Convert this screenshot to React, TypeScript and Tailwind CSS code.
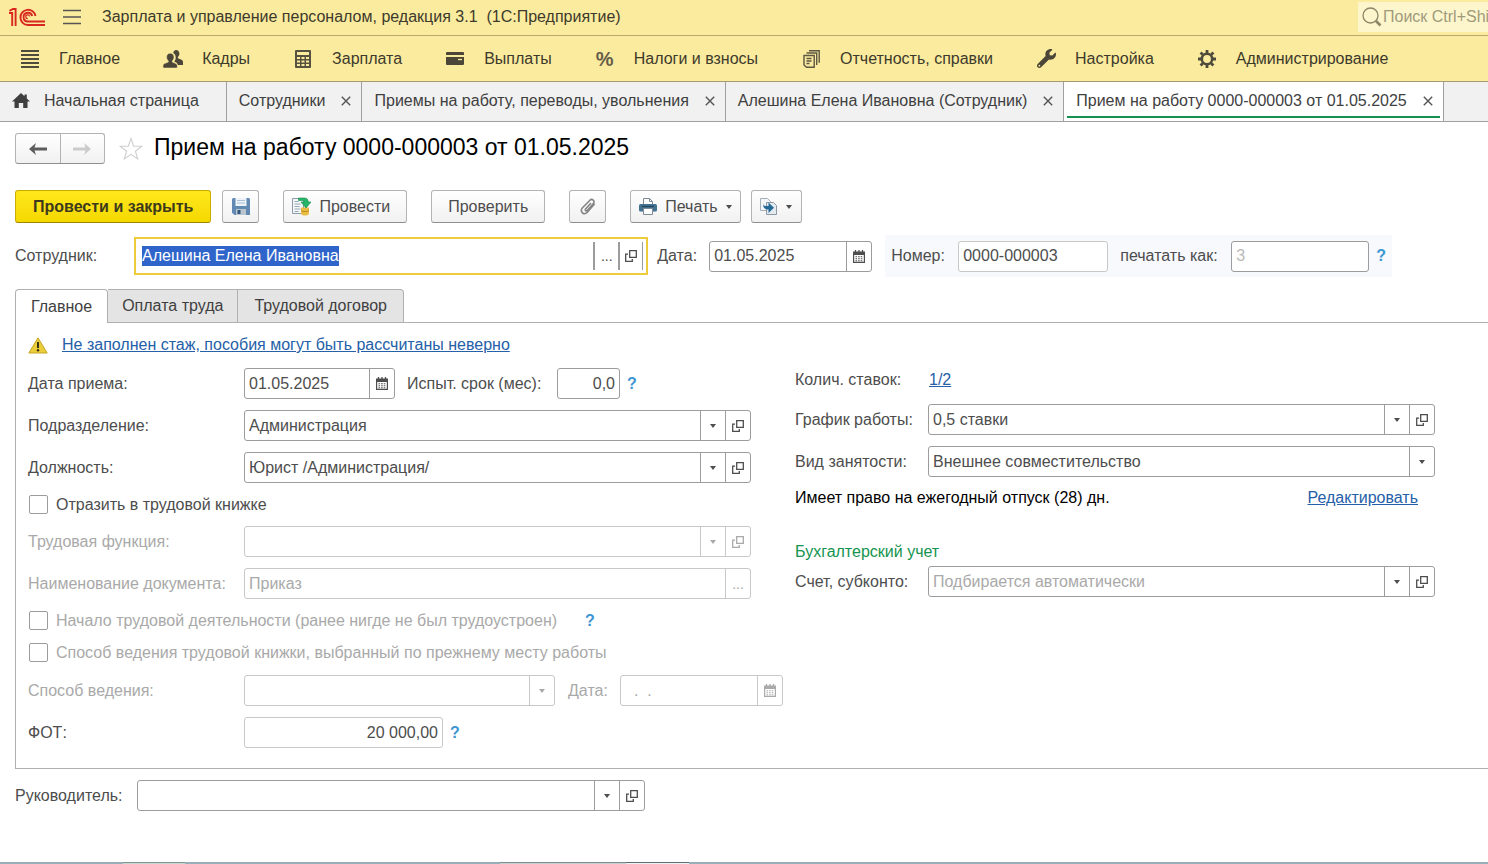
import { useEffect, useRef, type ReactNode } from 'react';
import clsx from 'clsx';
import { FaWrench } from 'react-icons/fa';

/* ---------- Icons ---------- */

const LogoIcon = () => (
  <svg width="36" height="18" viewBox="0 0 36 18" fill="none" stroke="#d8281f" strokeWidth="1.9">
    <path d="M0 5h3.200V18M.5 2.800 4 1h2.600v17" />
    <path d="M26.500 8A7.600 7.600 0 1 0 18.800 17H36" />
    <path d="M23.200 8a4.400 4.400 0 1 0-4.400 5.500H36" />
    <path d="M20.500 8.400a1.900 1.900 0 1 0-1.700 2.200" strokeWidth="1.200" />
  </svg>
);

const BurgerIcon = () => (
  <svg width="18" height="16" viewBox="0 0 18 16" stroke="#555" strokeWidth="1.4">
    <path d="M0 1.5h18M0 8h18M0 14.5h18" />
  </svg>
);

const ListIcon = () => (
  <svg width="18" height="18" viewBox="0 0 18 18" stroke="#4f4b3c" strokeWidth="2">
    <path d="M0 1h18M0 5h18M0 9h18M0 13h18M0 17h18" />
  </svg>
);

const PeopleIcon = () => (
  <svg width="20" height="18" viewBox="0 0 20 18" fill="#4b4638">
    <path d="M13 0c2 0 3.400 1.500 3.400 3.600 0 1.500-.6 2.700-1.500 3.500v1.200l3.600 1.500c1 .5 1.500 1.200 1.500 2.300V15h-5.200c-.3-1.500-1.200-2.300-2.600-2.900l-1-.5c1-1 1.500-2.400 1.500-4.100 0-2-.9-3.600-2.500-4.500C10.600 1.100 11.600 0 13 0z" />
    <path
      d="M7.300 3.200c2.200 0 3.700 1.600 3.700 3.900 0 1.700-.7 3-1.700 3.800v1.200l3.500 1.500c1 .5 1.500 1.300 1.500 2.400v1c0 .6-.4 1-1 1H1c-.6 0-1-.4-1-1v-1c0-1.100.5-1.900 1.500-2.400L5.300 12.100v-1.200c-1-.8-1.700-2.100-1.700-3.800 0-2.300 1.500-3.900 3.700-3.900z"
      stroke="#fbeb9e"
      strokeWidth=".5"
    />
  </svg>
);

const CalculatorIcon = () => (
  <svg width="16" height="18" viewBox="0 0 16 18">
    <rect width="16" height="18" rx="1" fill="#57513f" />
    <path d="M2 2h12v3H2z" fill="#fbeb9e" />
    <path
      d="M2 7h3v2H2zM6.500 7h3v2h-3zM11 7h3v2h-3zM2 10.500h3v2H2zM6.500 10.500h3v2h-3zM11 10.500h3v2h-3zM2 14h3v2H2zM6.500 14h3v2h-3zM11 14h3v2h-3z"
      fill="#fbeb9e"
    />
  </svg>
);

const CardIcon = () => (
  <svg width="18" height="13" viewBox="0 0 18 13">
    <path d="M1 0h16a1 1 0 0 1 1 1v2H0V1a1 1 0 0 1 1-1zM0 5h18v7a1 1 0 0 1-1 1H1a1 1 0 0 1-1-1z" fill="#4b4638" />
    <path d="M12 7.500h4" stroke="#fbeb9e" strokeWidth="1.300" />
  </svg>
);

const PapersIcon = () => (
  <svg width="17" height="18" viewBox="0 0 17 18" fill="none" stroke="#5d5743" strokeWidth="1.400">
    <path d="M6 .7h10.200v12M3.500 3h10.200v12" />
    <path d="M1 5.500h10.200v11.800H3.500L1 15z" />
    <path d="M3.500 8.500h5M3.500 11h5M3.500 13.500h3" />
  </svg>
);

const GearIcon = () => (
  <svg width="18" height="18" viewBox="0 0 18 18" fill="none" stroke="#4f4b3c">
    <circle cx="9" cy="9" r="5.200" strokeWidth="2.600" />
    <path
      d="M9 0v3M9 15v3M0 9h3M15 9h3M2.600 2.600l2.200 2.200M13.200 13.200l2.200 2.200M2.600 15.400l2.200-2.200M13.200 4.800l2.200-2.200"
      strokeWidth="2.800"
    />
  </svg>
);

const HomeIcon = () => (
  <svg width="18" height="15" viewBox="0 0 18 15" fill="#3f3f3f">
    <path d="M9 0l3.500 3.300V1.500h2.300v4L18 8.500h-2.500V15h-4.300v-5H6.800v5H2.500V8.500H0z" />
  </svg>
);

const SearchIcon = () => (
  <svg width="20" height="20" viewBox="0 0 20 20" fill="none" stroke="#8d8666">
    <circle cx="8.500" cy="8.500" r="7.500" strokeWidth="1.300" />
    <path d="M14 14l4.500 4.500" strokeWidth="2.600" />
  </svg>
);

const CloseIcon = () => (
  <svg width="10" height="10" viewBox="0 0 10 10" stroke="#555" strokeWidth="1.400">
    <path d="M.8.8l8.400 8.400M9.200.8L.8 9.200" />
  </svg>
);

const ArrowIcon = ({ className }: { className: string }) => (
  <svg width="18" height="12" viewBox="0 0 18 12" className={className}>
    <path d="M0 6l7-6-1.500 4.500H18v3H5.500L7 12z" fill="currentColor" />
  </svg>
);

const StarIcon = () => (
  <svg width="24" height="24" viewBox="0 0 24 24" fill="none" stroke="#cfcfcf" strokeWidth="1.100">
    <path d="M12 1.500l2.700 7.600 8 .2-6.300 4.900 2.300 7.800-6.700-4.600L5.300 22l2.300-7.800L1.300 9.300l8-.2z" />
  </svg>
);

const SaveIcon = () => (
  <svg width="18" height="17" viewBox="0 0 18 17">
    <path d="M1.500 0h15A1.500 1.500 0 0 1 18 1.500V17H2.500L0 14.800V1.500A1.500 1.500 0 0 1 1.500 0z" fill="#6189b4" />
    <path d="M3.500 0h11v8h-11z" fill="#edf3f9" />
    <path d="M5 2.500h8M5 5h8" stroke="#a9bfd6" />
    <path d="M4 11h10v6H4z" fill="#b9c6ce" />
    <path d="M5.500 12h3v4h-3z" fill="#34587d" />
  </svg>
);

const PostIcon = () => (
  <svg width="19" height="19" viewBox="0 0 19 19">
    <path d="M.5 1.500h11v15H.5z" fill="#f4f7fa" stroke="#8d9aa8" />
    <path d="M2.500 4.500h4M2.500 7h6M2.500 9.500h5M2.500 12h6M2.500 14.500h4" stroke="#9aa8b5" />
    <path d="M9 10.500h8v6c0 2.700-8 2.700-8 0z" fill="#e9bd45" />
    <path d="M9 13.500c1.500 1.500 6.500 1.500 8 0" stroke="#b98a1e" fill="none" />
    <path d="M6.500 1h6c2.500 0 3.700 1.500 3.700 4H19l-5 6-5-6h3c0-1.200-.6-1.500-1.500-1.500h-4z" fill="#27b567" stroke="#138a4a" strokeWidth=".6" />
  </svg>
);

const ClipIcon = () => (
  <svg width="16" height="17" viewBox="0 0 16 17" fill="none" stroke="#858585" strokeWidth="1.600" strokeLinecap="round">
    <path d="M10.500 5.500 5.600 11c-1 1.200.6 2.600 1.700 1.400l6-6.900c2-2.400-1.200-5.600-3.600-3L2.500 9.800c-3.200 3.800 1.500 8 4.800 4.500l7-8" />
  </svg>
);

const PrinterIcon = () => (
  <svg width="18" height="17" viewBox="0 0 18 17">
    <path d="M4.500 7V.5h6l3 3V7" fill="#fff" stroke="#7e8b97" />
    <path d="M10.500.5v3h3" fill="none" stroke="#7e8b97" />
    <rect y="6" width="18" height="7.500" rx="1.500" fill="#44708f" />
    <path d="M3 8.500h12" stroke="#22465f" strokeWidth="1.200" />
    <path d="M4.500 10.500h9v6h-9z" fill="#fff" stroke="#7e8b97" />
  </svg>
);

const CopyFromIcon = () => (
  <svg width="18" height="17" viewBox="0 0 18 17">
    <path d="M.5.500h7l3 3v9H.5z" fill="#f3f6f8" stroke="#a6b0b9" />
    <path d="M6.500 4.500h7l3 3v9h-10z" fill="#e4ebf0" stroke="#8b98a4" />
    <path d="M3 4.500c0 3 1 3.500 5.500 3.500V4.500L14 9.700 8.500 15v-3.500C4 11.500 3 9 3 4.500z" fill="#266a97" />
  </svg>
);

const WarningIcon = () => (
  <svg width="20" height="17" viewBox="0 0 20 17">
    <path d="M10 .8 19.200 16H.8z" fill="#ebcd3a" stroke="#c4a626" strokeLinejoin="round" />
    <path d="M10 5v6" stroke="#3b3410" strokeWidth="2" />
    <circle cx="10" cy="13.300" r="1.200" fill="#3b3410" />
  </svg>
);

const CaretIcon = () => (
  <svg width="6" height="4" viewBox="0 0 6 4">
    <path d="M0 0h6L3 4z" fill="currentColor" />
  </svg>
);

const OpenIcon = () => (
  <svg width="12" height="12" viewBox="0 0 12 12" fill="none" stroke="currentColor" strokeWidth="1.300">
    <path d="M4.700.7h6.600v6.600H4.700z" />
    <path d="M3 4.200H.7v7.100h6.600V9" />
  </svg>
);

const CalendarIcon = () => (
  <svg width="12" height="13" viewBox="0 0 12 13">
    <path d="M2.500 0v3M6 0v3M9.500 0v3" stroke="currentColor" strokeWidth="1.300" />
    <path d="M.6 2h10.800v10.400H.6z" fill="none" stroke="currentColor" strokeWidth="1.200" />
    <path d="M0 2h12v3H0z" fill="currentColor" />
    <path d="M2.500 6.800h7M2.500 8.800h7M2.500 10.700h7" stroke="currentColor" strokeWidth="1.100" strokeDasharray="1.600 1" />
  </svg>
);

/* ---------- Form parts ---------- */

type BoxProps = { disabled?: boolean; className?: string; children: ReactNode };

// Rounded frame shared by every field
const Box = ({ disabled, className, children }: BoxProps) => (
  <div
    className={clsx(
      'flex h-[31px] min-w-0 overflow-hidden rounded-[3px] border bg-white',
      disabled ? 'border-[#c8c8c8] text-[#a9a9a9]' : 'border-[#9c9c9c] text-[#4d4d4d]',
      className,
    )}
  >
    {children}
  </div>
);

type CellProps = { label: string; disabled?: boolean; children: ReactNode };

const CellButton = ({ label, disabled, children }: CellProps) => (
  <button
    type="button"
    aria-label={label}
    disabled={disabled}
    className={clsx(
      'flex w-[25px] shrink-0 items-center justify-center border-l',
      disabled ? 'border-[#c8c8c8]' : 'border-[#9c9c9c]',
    )}
  >
    {children}
  </button>
);

type SelectFieldProps = {
  id: string;
  value: string;
  disabled?: boolean;
  open?: boolean;
  muted?: boolean;
  className?: string;
};

const SelectField = ({ id, value, disabled, open, muted, className }: SelectFieldProps) => (
  <Box disabled={disabled} className={className}>
    <div className="relative min-w-0 flex-1">
      <select
        id={id}
        disabled={disabled}
        className={clsx('h-full w-full appearance-none pr-7 pl-1 outline-none', muted && 'text-[#a9a9a9]')}
      >
        <option>{value}</option>
      </select>
      <span
        className={clsx(
          'pointer-events-none absolute inset-y-0 right-0 flex w-[25px] items-center justify-center border-l',
          disabled ? 'border-[#c8c8c8]' : 'border-[#9c9c9c]',
        )}
      >
        <CaretIcon />
      </span>
    </div>
    {open && (
      <CellButton label="Открыть" disabled={disabled}>
        <OpenIcon />
      </CellButton>
    )}
  </Box>
);

const DateField = ({ id, value, disabled, className }: SelectFieldProps) => (
  <Box disabled={disabled} className={className}>
    <input
      id={id}
      defaultValue={value}
      disabled={disabled}
      className="w-0 min-w-0 flex-1 px-1 whitespace-pre outline-none"
    />
    <CellButton label="Календарь" disabled={disabled}>
      <CalendarIcon />
    </CellButton>
  </Box>
);

const Help = () => (
  <button type="button" className="font-bold text-[#3d96d2]">
    ?
  </button>
);

type RowProps = { id: string; label: string; disabled?: boolean; children: ReactNode };

const LeftRow = ({ id, label, disabled, children }: RowProps) => (
  <div className="flex items-center">
    <label htmlFor={id} className={clsx('w-[216px] shrink-0', disabled && 'text-[#a9a9a9]')}>
      {label}
    </label>
    {children}
  </div>
);

const RightRow = ({ id, label, children }: RowProps) => (
  <div className="flex items-center">
    <label htmlFor={id} className="w-[133px] shrink-0">
      {label}
    </label>
    {children}
  </div>
);

const CheckRow = ({ id, label, disabled, children }: Omit<RowProps, 'children'> & { children?: ReactNode }) => (
  <div className="flex h-[21px] items-center">
    <input
      id={id}
      type="checkbox"
      disabled={disabled}
      className="ml-px size-[19px] shrink-0 appearance-none rounded-[2px] border border-[#9c9c9c] bg-white"
    />
    <label htmlFor={id} className={clsx('mr-7 ml-2', disabled && 'text-[#a9a9a9]')}>
      {label}
    </label>
    {children}
  </div>
);

const toolButton =
  'flex h-[33px] items-center justify-center rounded-[3px] border border-[#b3b3b3] border-b-[#8f8f8f] bg-linear-to-b from-white to-[#f1f1f1]';

/* ---------- Page ---------- */

const sections = [
  { label: 'Главное', icon: <ListIcon /> },
  { label: 'Кадры', icon: <PeopleIcon /> },
  { label: 'Зарплата', icon: <CalculatorIcon /> },
  { label: 'Выплаты', icon: <CardIcon /> },
  { label: 'Налоги и взносы', icon: <span className="text-xl font-bold text-[#655e49]">%</span> },
  { label: 'Отчетность, справки', icon: <PapersIcon /> },
  { label: 'Настройка', icon: <FaWrench className="size-[19px] text-[#4b4638]" /> },
  { label: 'Администрирование', icon: <GearIcon /> },
];

const windows = [
  'Сотрудники',
  'Приемы на работу, переводы, увольнения',
  'Алешина Елена Ивановна (Сотрудник)',
  'Прием на работу 0000-000003 от 01.05.2025',
];

export default function App() {
  const employeeRef = useRef<HTMLInputElement>(null);

  useEffect(() => {
    employeeRef.current?.focus();
    employeeRef.current?.select();
  }, []);

  return (
    <div className="flex min-h-screen flex-col overflow-hidden bg-white font-['Liberation_Sans',Arial,sans-serif] text-base leading-5 text-[#4d4d4d]">
      {/* Title bar */}
      <header className="flex h-9 items-center border-b border-[#b5a96c] bg-[#fbeb9e] pb-0.5 pl-[9px] text-[#3d3a2c]">
        <LogoIcon />
        <button type="button" aria-label="Меню" className="ml-[18px]">
          <BurgerIcon />
        </button>
        <span className="ml-[21px] flex-1 whitespace-pre">
          Зарплата и управление персоналом, редакция 3.1{'  '}(1С:Предприятие)
        </span>
        <label className="flex h-[30px] w-[130px] shrink-0 items-center bg-[#fdf6cd] pl-1">
          <SearchIcon />
          <input
            type="text"
            aria-label="Поиск"
            placeholder="Поиск Ctrl+Shift+F"
            className="ml-px w-0 flex-1 outline-none placeholder:text-[#a09a7c]"
          />
        </label>
      </header>

      {/* Sections */}
      <nav className="flex h-[46px] items-center gap-[43px] border-b border-[#a39b72] bg-[#fbeb9e] pl-5 text-[#3d3a2c]">
        {sections.map((s) => (
          <a key={s.label} href="#" className="flex items-center gap-[19px] whitespace-nowrap">
            <span className="flex w-5 justify-center">{s.icon}</span>
            {s.label}
          </a>
        ))}
      </nav>

      {/* Open windows */}
      <div className="flex h-10 border-b border-[#a0a0a0] bg-[#f1f1f1] text-[#3f3f3f]">
        <a
          href="#"
          className="flex items-center gap-[14px] border-r border-[#a0a0a0] pr-[27px] pb-0.5 pl-3 whitespace-nowrap"
        >
          <HomeIcon />
          Начальная страница
        </a>
        {windows.map((title, i) => {
          const active = i === windows.length - 1;
          return (
            <div
              key={title}
              className={clsx(
                'relative flex items-center gap-4 border-r border-[#a0a0a0] pr-[10px] pb-0.5 pl-3',
                active && 'bg-white',
              )}
            >
              <a href="#" className="whitespace-nowrap">
                {title}
              </a>
              <button type="button" aria-label="Закрыть">
                <CloseIcon />
              </button>
              {active && <span className="absolute inset-x-[3px] bottom-[3px] h-0.5 bg-[#159150]" />}
            </div>
          );
        })}
      </div>

      <main className="pt-[11px] pl-[15px]">
        {/* Form title */}
        <div className="flex items-center">
          <div className="flex h-[31px] w-[90px] rounded-[3px] border border-[#b3b3b3] border-b-[#8f8f8f] bg-linear-to-b from-white to-[#f1f1f1]">
            <button type="button" aria-label="Назад" className="flex flex-1 items-center justify-center border-r border-[#b3b3b3]">
              <ArrowIcon className="text-[#5c5c5c]" />
            </button>
            <button type="button" aria-label="Вперед" className="flex flex-1 items-center justify-center">
              <ArrowIcon className="rotate-180 text-[#cbcbcb]" />
            </button>
          </div>
          <button type="button" aria-label="В избранное" className="ml-[14px]">
            <StarIcon />
          </button>
          <h1 className="ml-[11px] pb-1 text-[23px] text-black">Прием на работу 0000-000003 от 01.05.2025</h1>
        </div>

        {/* Toolbar */}
        <div className="mt-[26px] flex items-center">
          <button
            type="button"
            className="h-[33px] rounded-[3px] border border-[#c9ac00] border-b-[#9c8500] bg-linear-to-b from-[#ffe81a] to-[#f5d800] px-[17px] font-bold text-[#3d3a1c]"
          >
            Провести и закрыть
          </button>
          <button type="button" aria-label="Записать" className={clsx(toolButton, 'ml-[11px] w-[37px]')}>
            <SaveIcon />
          </button>
          <button type="button" className={clsx(toolButton, 'ml-6 gap-2 pr-4 pl-2')}>
            <PostIcon />
            Провести
          </button>
          <button type="button" className={clsx(toolButton, 'ml-6 px-4')}>
            Проверить
          </button>
          <button type="button" aria-label="Файлы" className={clsx(toolButton, 'ml-6 w-[37px]')}>
            <ClipIcon />
          </button>
          <button type="button" className={clsx(toolButton, 'ml-6 gap-2 px-2')}>
            <PrinterIcon />
            Печать
            <CaretIcon />
          </button>
          <button type="button" aria-label="Создать на основании" className={clsx(toolButton, 'ml-[10px] w-[51px] gap-2')}>
            <CopyFromIcon />
            <CaretIcon />
          </button>
        </div>

        {/* Document header */}
        <div className="mt-3 flex h-[42px] items-center pr-24">
          <label htmlFor="employee" className="w-[119px] shrink-0">
            Сотрудник:
          </label>
          <div className="flex h-[38px] flex-1 border-2 border-[#edcb3b] py-[3px] pr-[3px]">
            <input
              id="employee"
              ref={employeeRef}
              defaultValue="Алешина Елена Ивановна"
              className="w-0 flex-1 px-[6px] outline-none selection:bg-[#2f65ca] selection:text-white"
            />
            <button type="button" aria-label="Выбрать" className="w-[25px] border-l-2 border-[#9c9c9c] text-sm">
              ...
            </button>
            <button
              type="button"
              aria-label="Открыть"
              className="flex w-[25px] items-center justify-center border-r border-l-2 border-[#9c9c9c]"
            >
              <OpenIcon />
            </button>
          </div>
          <label htmlFor="date" className="ml-[9px] w-[52px]">
            Дата:
          </label>
          <DateField id="date" value="01.05.2025" className="w-[163px]" />
          <div className="ml-[13px] flex h-full items-center bg-[#f7f9fd] px-[6px]">
            <label htmlFor="number" className="w-[67px]">
              Номер:
            </label>
            <Box className="w-[150px] border-[#c8c8c8] bg-[#f7f9fd]">
              <input id="number" defaultValue="0000-000003" className="w-full px-1 outline-none" />
            </Box>
            <label htmlFor="printAs" className="ml-3 w-[111px] whitespace-nowrap">
              печатать как:
            </label>
            <Box className="mr-[7px] w-[138px]">
              <input id="printAs" placeholder="3" className="w-full px-1 outline-none placeholder:text-[#b9b9b9]" />
            </Box>
            <Help />
          </div>
        </div>

        {/* Pages */}
        <div className="mt-3 flex h-[34px] text-[#3f3f3f]">
          <button type="button" className="relative z-10 rounded-t-[4px] border border-b-0 border-[#b0b0b0] bg-white px-[15px]">
            Главное
          </button>
          <button type="button" className="border-y border-r border-[#b0b0b0] bg-[#e4e4e4] px-[14px]">
            Оплата труда
          </button>
          <button type="button" className="rounded-tr-[4px] border-y border-r border-[#b0b0b0] bg-[#e4e4e4] px-4">
            Трудовой договор
          </button>
        </div>

        <section className="-mt-px grid grid-cols-[723fr_640fr] gap-11 border-y border-l border-[#b0b0b0] pt-3 pr-[53px] pb-5 pl-3">
          <div>
            <div className="flex h-5 items-center">
              <WarningIcon />
              <a href="#" className="ml-[14px] text-[#2560a8] underline">
                Не заполнен стаж, пособия могут быть рассчитаны неверно
              </a>
            </div>

            <div className="mt-[13px] flex flex-col gap-[11px]">
              <LeftRow id="hireDate" label="Дата приема:">
                <DateField id="hireDate" value="01.05.2025" className="w-[151px]" />
                <label htmlFor="probation" className="ml-3 w-[150px] whitespace-nowrap">
                  Испыт. срок (мес):
                </label>
                <Box className="mr-[7px] w-[63px]">
                  <input id="probation" defaultValue="0,0" className="w-full px-1 text-right outline-none" />
                </Box>
                <Help />
              </LeftRow>
              <LeftRow id="department" label="Подразделение:">
                <SelectField id="department" value="Администрация" open className="flex-1" />
              </LeftRow>
              <LeftRow id="position" label="Должность:">
                <SelectField id="position" value="Юрист /Администрация/" open className="flex-1" />
              </LeftRow>
              <CheckRow id="workbook" label="Отразить в трудовой книжке" />
              <LeftRow id="duty" label="Трудовая функция:" disabled>
                <SelectField id="duty" value="" disabled open className="flex-1" />
              </LeftRow>
              <LeftRow id="docName" label="Наименование документа:" disabled>
                <Box disabled className="flex-1">
                  <input id="docName" defaultValue="Приказ" disabled className="w-0 flex-1 px-1" />
                  <CellButton label="Выбрать" disabled>
                    <span className="text-sm">...</span>
                  </CellButton>
                </Box>
              </LeftRow>
              <CheckRow id="firstJob" label="Начало трудовой деятельности (ранее нигде не был трудоустроен)" disabled>
                <Help />
              </CheckRow>
              <CheckRow id="prevMethod" label="Способ ведения трудовой книжки, выбранный по прежнему месту работы" disabled />
            </div>

            <div className="mt-3 flex flex-col gap-[11px]">
              <div className="-mr-8">
                <LeftRow id="method" label="Способ ведения:" disabled>
                  <SelectField id="method" value="" disabled className="flex-1" />
                  <label htmlFor="methodDate" className="ml-[13px] w-[52px] text-[#a9a9a9]">
                    Дата:
                  </label>
                  <DateField id="methodDate" value="  .  ." disabled className="w-[163px]" />
                </LeftRow>
              </div>
              <LeftRow id="payroll" label="ФОТ:">
                <Box className="mr-[7px] w-[199px] border-[#c8c8c8]">
                  <input id="payroll" defaultValue="20 000,00" readOnly className="w-full px-1 text-right outline-none" />
                </Box>
                <Help />
              </LeftRow>
            </div>
          </div>

          <div className="pt-[35px]">
            <div className="flex h-5 items-center">
              <span className="w-[134px]">Колич. ставок:</span>
              <a href="#" className="text-[#2560a8] underline">
                1/2
              </a>
            </div>
            <div className="mt-[14px] flex flex-col gap-[11px]">
              <RightRow id="schedule" label="График работы:">
                <SelectField id="schedule" value="0,5 ставки" open className="flex-1" />
              </RightRow>
              <RightRow id="employment" label="Вид занятости:">
                <SelectField id="employment" value="Внешнее совместительство" className="flex-1" />
              </RightRow>
            </div>
            <div className="mt-[11px] flex h-5 items-center justify-between pr-[17px]">
              <span className="text-black">Имеет право на ежегодный отпуск (28) дн.</span>
              <a href="#" className="text-[#2560a8] underline">
                Редактировать
              </a>
            </div>
            <h2 className="mt-[34px] mb-1 text-[#149450]">Бухгалтерский учет</h2>
            <RightRow id="account" label="Счет, субконто:">
              <SelectField id="account" value="Подбирается автоматически" open muted className="flex-1" />
            </RightRow>
          </div>
        </section>

        {/* Footer */}
        <div className="mt-[11px] flex items-center">
          <label htmlFor="manager" className="w-[122px]">
            Руководитель:
          </label>
          <SelectField id="manager" value="" open className="w-[508px]" />
        </div>
      </main>

      {/* Edge of the system taskbar */}
      <div className="mt-auto flex h-0.5 bg-[#98aeb8]">
        <span className="ml-[123px] w-[62px] border-t border-[#7f958f] bg-[#c9d8cf]" />
        <span className="ml-[315px] w-[63px] border-t border-[#7f8f8f] bg-[#c5cfcc]" />
        <span className="w-[63px] border-t border-[#7f8f8f] bg-[#c5cfcc]" />
        <span className="w-[63px] border-t border-[#5f6f70] bg-[#eef1f1]" />
      </div>
    </div>
  );
}
